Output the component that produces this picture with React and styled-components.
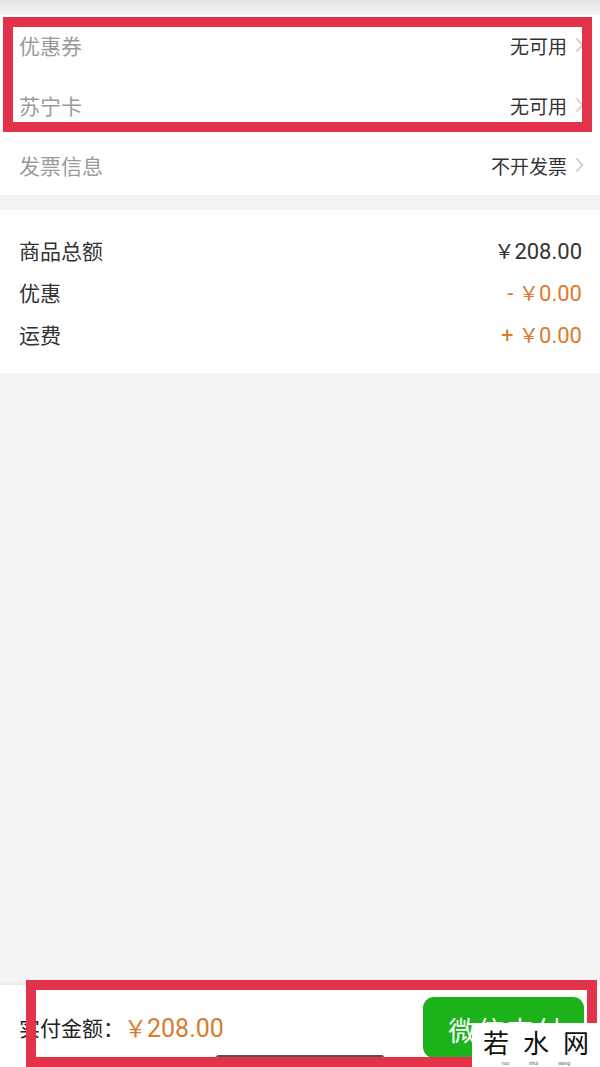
import React from 'react';
import styled, { createGlobalStyle } from 'styled-components';

const GlobalStyle = createGlobalStyle`
  html, body {
    margin: 0;
    padding: 0;
    background: #f3f3f3;
  }
  body {
    font-family: Roboto, "Noto Sans CJK SC", "Noto Sans", sans-serif;
  }
`;

const Page = styled.div`
  position: relative;
  width: 600px;
  height: 1067px;
  display: flex;
  flex-direction: column;
  overflow: hidden;
  background: #f3f3f3;
`;

const TopShade = styled.div`
  height: 15px;
  background: linear-gradient(#e4e4e4, #f4f4f4);
`;

const Section = styled.div`
  background: #fff;
  padding: ${p => p.$pad || '0'};
  margin-bottom: ${p => p.$gap || '0'};
`;

const Row = styled.div`
  height: ${p => p.$h}px;
  display: flex;
  align-items: center;
  justify-content: space-between;
  padding: 0 16px 0 19px;
`;

const SumRow = styled(Row)`
  padding: 0 18px 0 19px;
`;

const Label = styled.span`
  font-size: 21px;
  color: ${p => p.$muted ? '#9a9a9a' : '#333'};
`;

const Value = styled.span`
  display: flex;
  align-items: center;
  gap: 8px;
  font-size: 19px;
  color: #333;
`;

const Money = styled.span`
  font-size: 22px;
  color: ${p => p.$accent ? '#dc7a2c' : '#333'};
`;

const Yen = styled.span`
  font-family: "Noto Sans CJK SC", sans-serif;
  font-size: 0.92em;
`;

const Spacer = styled.div`
  flex: 1;
`;

const BottomBar = styled.div`
  height: 82px;
  background: #fff;
  box-shadow: 0 -1px 4px rgba(0, 0, 0, 0.06);
  display: flex;
  align-items: center;
  justify-content: space-between;
  padding: 0 16px 0 19px;
  box-sizing: border-box;
`;

const Total = styled.div`
  display: flex;
  align-items: center;
  font-size: 21px;
  color: #222;
  margin-top: 2px;
`;

const TotalPrice = styled.span`
  font-size: 25px;
  color: #d97b2e;
`;

const PayButton = styled.button`
  width: 161px;
  height: 61px;
  border: none;
  border-radius: 11px;
  background: #1bb21a;
  color: #fff;
  font-family: inherit;
  font-size: 27px;
  letter-spacing: 2px;
  padding: 4px 0 0 6px;
  margin-top: 3px;
`;

const HomeBar = styled.div`
  position: absolute;
  left: 216px;
  top: 1055px;
  width: 168px;
  height: 5px;
  border-radius: 3px;
  background: #555;
`;

const Annotation = styled.div`
  position: absolute;
  left: ${p => p.$x}px;
  top: ${p => p.$y}px;
  width: ${p => p.$w}px;
  height: ${p => p.$h}px;
  border: 10px solid #e2334a;
  box-sizing: border-box;
  pointer-events: none;
`;

const Watermark = styled.div`
  position: absolute;
  left: 472px;
  top: 1023px;
  width: 128px;
  height: 44px;
  background: #fff;
  display: flex;
  flex-direction: column;
  align-items: center;
`;

const WatermarkText = styled.div`
  display: flex;
  gap: 14px;
  font-family: "Noto Sans CJK SC", sans-serif;
  font-size: 26px;
  line-height: 30px;
  margin-top: 4px;
  color: #111;
`;

const WatermarkSub = styled.div`
  display: flex;
  gap: 20px;
  font-family: "Liberation Sans", sans-serif;
  font-size: 5px;
  line-height: 6px;
  margin-top: 3px;
  color: #666;
`;

function Chevron() {
  return (
    <svg width="9" height="16" viewBox="0 0 9 16">
      <path d="M1.5 1.5 L7.5 8 L1.5 14.5" fill="none" stroke="#c8c8c8" strokeWidth="1.6" />
    </svg>
  );
}

const options = [
  { label: '优惠券', value: '无可用' },
  { label: '苏宁卡', value: '无可用' },
  { label: '发票信息', value: '不开发票' },
];

const summary = [
  { label: '商品总额', sign: '', amount: '208.00' },
  { label: '优惠', sign: '- ', amount: '0.00', accent: true },
  { label: '运费', sign: '+ ', amount: '0.00', accent: true },
];

export default function App() {
  return (
    <Page>
      <GlobalStyle />
      <TopShade />
      <Section $gap="15px">
        {options.map(o => (
          <Row key={o.label} $h={60}>
            <Label $muted>{o.label}</Label>
            <Value>{o.value}<Chevron /></Value>
          </Row>
        ))}
      </Section>
      <Section $pad="19px 0 18px">
        {summary.map(s => (
          <SumRow key={s.label} $h={42}>
            <Label>{s.label}</Label>
            <Money $accent={s.accent}>{s.sign}<Yen>￥</Yen>{s.amount}</Money>
          </SumRow>
        ))}
      </Section>
      <Spacer />
      <BottomBar>
        <Total>实付金额：<TotalPrice><Yen>￥</Yen>208.00</TotalPrice></Total>
        <PayButton>微信支付</PayButton>
      </BottomBar>
      <HomeBar />
      <Annotation $x={3} $y={17} $w={589} $h={115} />
      <Annotation $x={26} $y={980} $w={571} $h={87} />
      <Watermark>
        <WatermarkText><span>若</span><span>水</span><span>网</span></WatermarkText>
        <WatermarkSub><span>ruo</span><span>shui</span><span>wang</span></WatermarkSub>
      </Watermark>
    </Page>
  );
}
